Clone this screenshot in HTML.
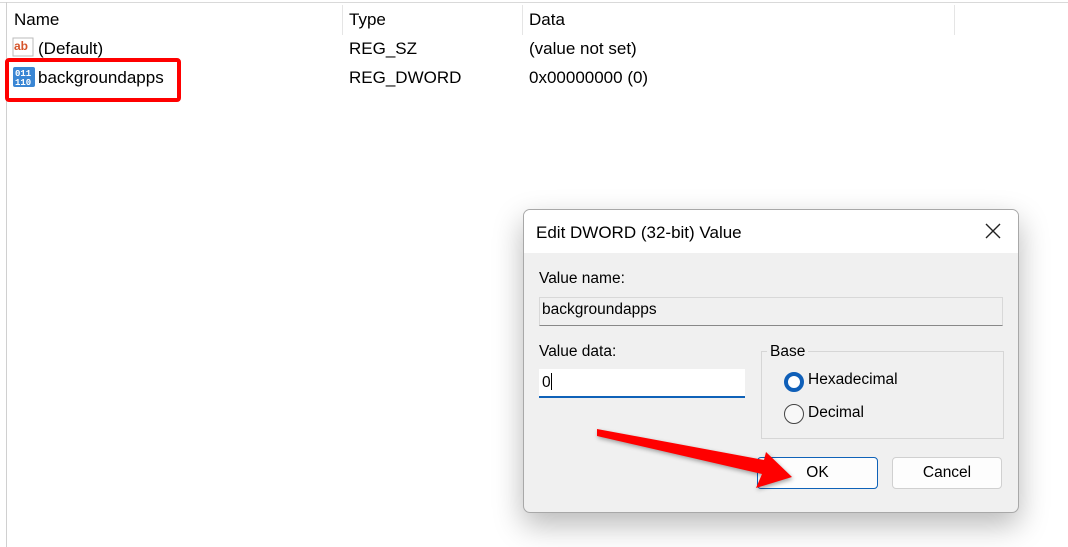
<!DOCTYPE html>
<html><head><style>
body{margin:0;width:1068px;height:547px;background:#fff;position:relative;overflow:hidden;font-family:"Liberation Sans",sans-serif;font-size:17px;color:#000}
.a{position:absolute;white-space:nowrap}
.vl{position:absolute;top:5px;height:30px;width:1px;background:#e5e5e5}
.d{font-size:15.5px}
</style></head><body>
<div class="a" style="left:0;top:2px;width:1068px;height:1px;background:#d9d9d9"></div>
<div class="a" style="left:6px;top:2px;width:1px;height:545px;background:#d0d0d0"></div>
<div class="vl" style="left:342px"></div><div class="vl" style="left:522px"></div><div class="vl" style="left:954px"></div>
<div class="a" style="left:14px;top:10px">Name</div>
<div class="a" style="left:349px;top:10px">Type</div>
<div class="a" style="left:529px;top:10px">Data</div>
<svg class="a" style="left:12px;top:37px" width="22" height="20"><rect x="1" y="1" width="20" height="18" fill="#fff" stroke="#bbb"/><text x="2" y="13" font-size="12" font-weight="bold" fill="#d5542a" font-family="Liberation Sans">ab</text></svg>
<div class="a" style="left:38px;top:39px">(Default)</div>
<div class="a" style="left:349px;top:39px">REG_SZ</div>
<div class="a" style="left:529px;top:39px">(value not set)</div>
<div class="a" style="left:5px;top:58px;width:168px;height:36px;border:4px solid #f00;border-radius:4px"></div>
<svg class="a" style="left:12px;top:66px" width="24" height="22"><rect x="1" y="1" width="22" height="20" rx="2" fill="#3a86d4"/><text x="3" y="10" font-size="9" font-weight="bold" fill="#fff" font-family="Liberation Mono">011</text><text x="3" y="19" font-size="9" font-weight="bold" fill="#fff" font-family="Liberation Mono">110</text></svg>
<div class="a" style="left:38px;top:68px">backgroundapps</div>
<div class="a" style="left:349px;top:68px">REG_DWORD</div>
<div class="a" style="left:529px;top:68px">0x00000000 (0)</div>

<div class="a" style="left:523px;top:209px;width:494px;height:302px;background:#f0f0f0;border:1px solid #a8a8a8;border-radius:7px;box-shadow:0 12px 30px rgba(0,0,0,.28);overflow:hidden">
<div class="a" style="left:0;top:0;width:494px;height:43px;background:#fff"></div>
<div class="a" style="left:12px;top:13px;font-size:17px">Edit DWORD (32-bit) Value</div>
<svg class="a" style="left:460px;top:12px" width="18" height="18"><path d="M2 2L16 16M16 2L2 16" stroke="#222" stroke-width="1.4"/></svg>
<div class="a d" style="left:15px;top:60px">Value name:</div>
<div class="a" style="left:15px;top:87px;width:462px;height:27px;background:#f0f0f0;border:1px solid #d8d8d8;border-bottom:1px solid #888"></div>
<div class="a d" style="left:18px;top:91px">backgroundapps</div>
<div class="a d" style="left:15px;top:133px">Value data:</div>
<div class="a" style="left:15px;top:159px;width:206px;height:27px;background:#fff;border-bottom:2px solid #0f62b8"></div>
<div class="a d" style="left:18px;top:163px">0<span style="display:inline-block;width:1px;height:17px;background:#000;vertical-align:-3px"></span></div>
<div class="a" style="left:237px;top:141px;width:241px;height:86px;border:1px solid #d6d6d6"></div>
<div class="a d" style="left:243px;top:133px;background:#f0f0f0;padding:0 3px">Base</div>
<div class="a" style="left:260px;top:162px;width:12px;height:12px;border:4px solid #0f5fb8;border-radius:50%;background:#fff"></div>
<div class="a d" style="left:284px;top:161px">Hexadecimal</div>
<div class="a" style="left:260px;top:194px;width:18px;height:18px;border:1px solid #444;border-radius:50%;background:#f8f8f8"></div>
<div class="a d" style="left:284px;top:194px">Decimal</div>
<div class="a d" style="left:233px;top:247px;width:119px;height:30px;background:#fdfdfd;border:1px solid #0f62b8;border-radius:4px;text-align:center;line-height:30px">OK</div>
<div class="a d" style="left:368px;top:247px;width:108px;height:30px;background:#fdfdfd;border:1px solid #d0d0d0;border-radius:4px;text-align:center;line-height:30px">Cancel</div>
</div>
<svg class="a" style="left:0;top:0" width="1068" height="547"><polygon points="597,429 764,460 766,452 792,477 756,488 762,474 597,436" fill="#f00" style="filter:drop-shadow(1px 2px 2px rgba(0,0,0,.35))"/></svg>
</body></html>
